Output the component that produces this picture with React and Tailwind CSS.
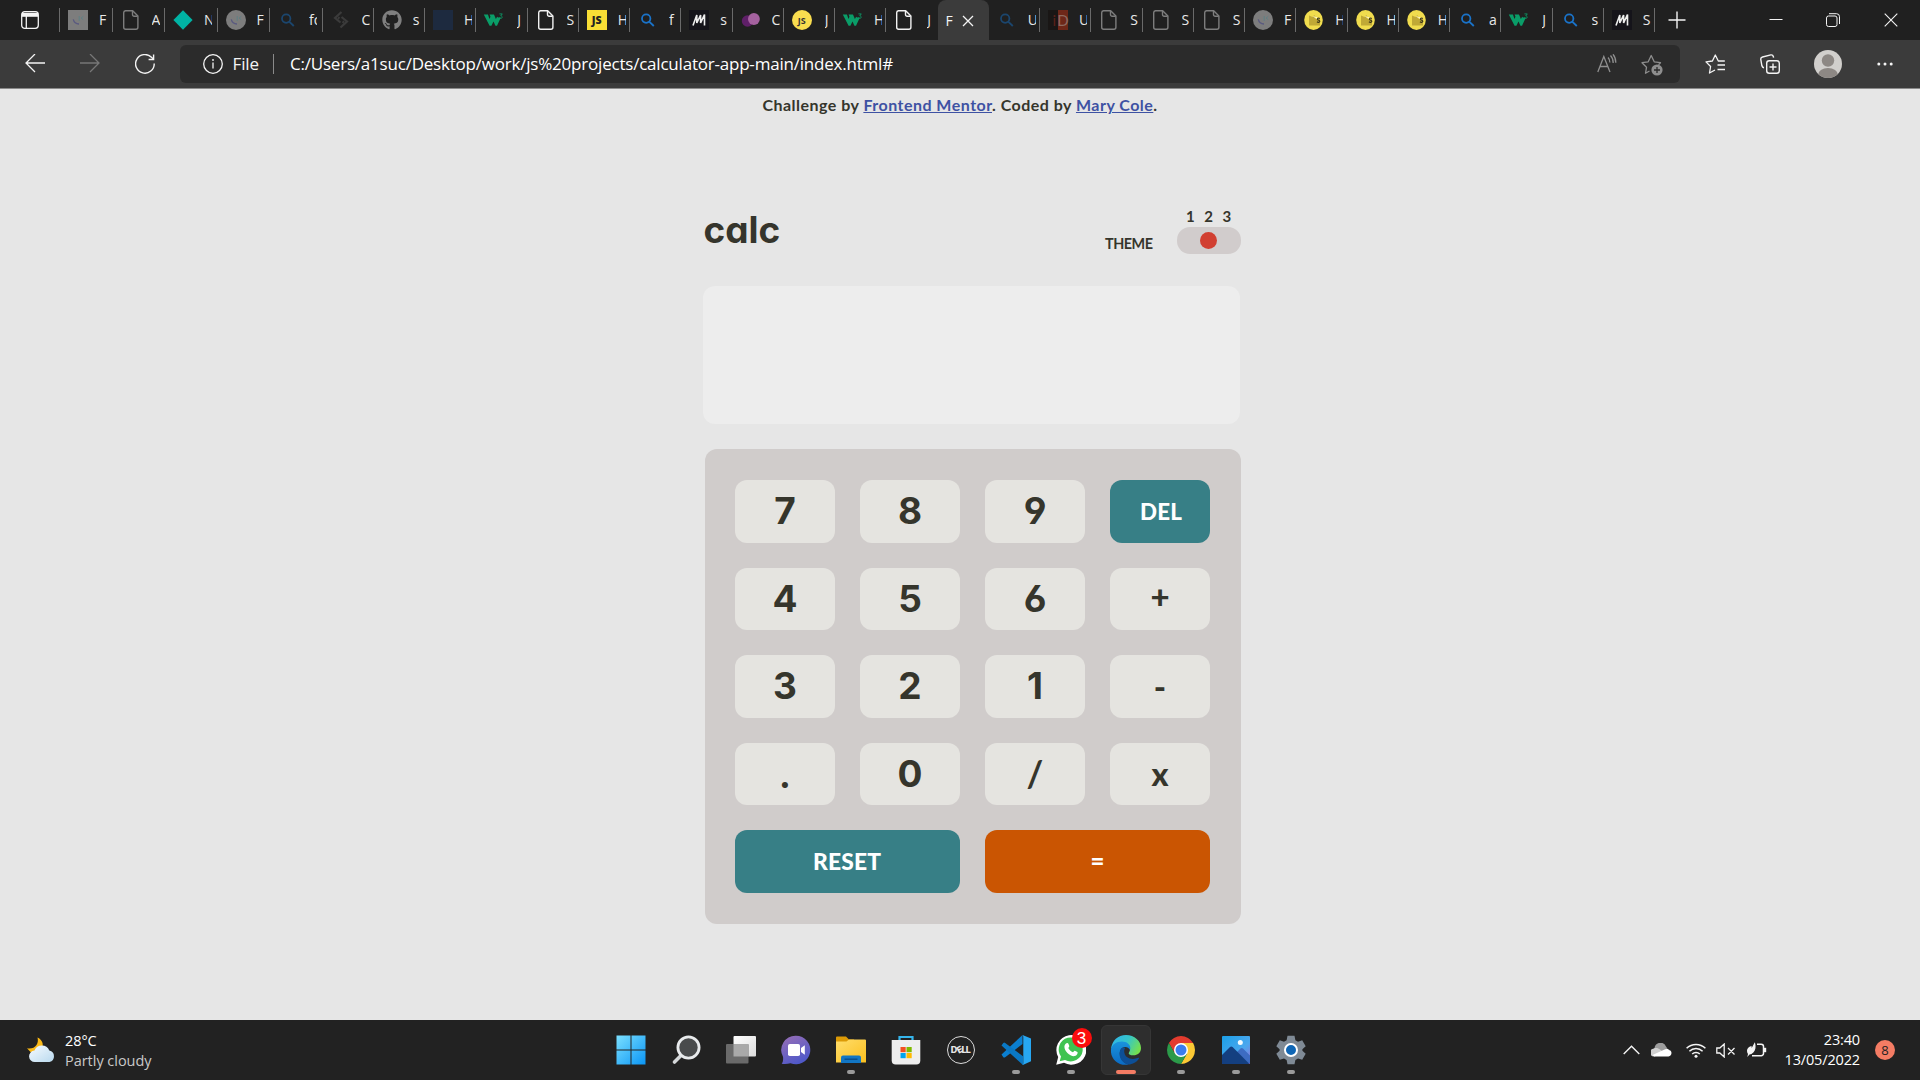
import React from "react";
import { FaGithub } from "react-icons/fa";

const UI = "font-['Open_Sans','Noto_Sans',sans-serif]";

/* ---------- tab favicons ---------- */
const PageIcon = ({ dim }) => (
  <svg width="20" height="20" viewBox="0 0 20 20" fill="none" stroke={dim ? "#7d7d7d" : "#f2f2f2"} strokeWidth="1.4" strokeLinejoin="round">
    <path d="M4.5.8h7.2l5.2 5.2v11.2a2 2 0 0 1-2 2H4.7a2 2 0 0 1-2-2V2.8A2 2 0 0 1 4.5.8z" />
    <path d="M11.5 1v3.6a1.6 1.6 0 0 0 1.6 1.6h3.6" />
  </svg>
);
const SearchIcon = ({ dim }) => (
  <svg width="20" height="20" viewBox="0 0 20 20" fill="none" stroke={dim ? "#1b466e" : "#1a73c9"} strokeWidth="1.8">
    <circle cx="8.2" cy="8.600" r="4.2" />
    <path d="M11.200 11.600l4.600 4.400" />
  </svg>
);
const Smile = ({ round }) => (
  <svg width="20" height="20" viewBox="0 0 20 20" fill="none">
    {round ? <circle cx="10" cy="10" r="10" fill="#7d7d7d" /> : <rect width="20" height="20" fill="#7d7d7d" />}
    <path d="M5.3 9.3c.6 2.800 3 4.600 5.700 4.700" stroke="#5a5a80" strokeWidth="1.300" />
    <path d="M11.200 6v5" stroke="#5d8084" strokeWidth="1" />
    <path d="M15.300 6.300l-2.300 1.800 2.300 1.500" stroke="#5d8084" strokeWidth=".9" />
  </svg>
);
const Diamond = () => (
  <svg width="20" height="20" viewBox="0 0 20 20"><path d="M10 .3L19.600 10 10 19.700.4 10z" fill="#00b3a4" /></svg>
);
const Cube = () => (
  <svg width="20" height="20" viewBox="0 0 20 20" fill="none" stroke="#3b3b3b" strokeWidth="2.200">
    <path d="M10.500 2L4 8l5.500 4.500M7 7.500l1.500 1M9.500 17.500l6.500-6L10.500 7M13 12.500l-1.500-1" />
  </svg>
);
const Navy = () => <div className="size-5 bg-[#1d2a3f]" />;
const W3 = () => (
  <svg width="22" height="20" viewBox="0 0 22 20" className="-ml-px">
    <path d="M.8 4.300h4.400l1.600 4.700 1-2.500-.9-2.200h4.600l2 4.700 1.300-2.400 1 .900h2.900l-4 8.500h-1.700L11 11.700 8.800 16H6.900z" fill="#0a9d68" />
    <path d="M17.200 3.600h3l-1.600 2c1.900 0 2 2.600.2 2.700-.9 0-1.500-.4-1.700-1" stroke="#0a9d68" strokeWidth=".9" fill="none" />
  </svg>
);
const JsSquare = () => (
  <div className="flex size-5 items-center justify-center bg-[#f8de35] font-['Open_Sans',sans-serif] text-[10.500px] leading-none font-extrabold text-[#222]">JS</div>
);
const JsRound = () => (
  <div className="flex size-5 items-center justify-center rounded-full bg-[#f9dd4f] font-['Open_Sans',sans-serif] text-[9px] leading-none font-bold text-[#333]">JS</div>
);
const Medium = () => (
  <svg width="20" height="20" viewBox="0 0 20 20">
    <rect width="20" height="20" fill="#15141a" />
    <path d="M4 15.500L7.800 5v8L11.600 5v8L15.500 4.500v11" stroke="#ededed" strokeWidth="1.600" fill="none" strokeLinejoin="bevel" />
  </svg>
);
const Dots = () => (
  <svg width="20" height="20" viewBox="0 0 20 20">
    <circle cx="6.500" cy="11" r="5.700" fill="#5f1f68" />
    <circle cx="12.900" cy="9" r="5.900" fill="#a5629f" />
  </svg>
);
const ID = () => (
  <div className="flex size-5 items-center bg-[#191615] font-['Lato',sans-serif] text-[15px] leading-none">
    <span className="w-[10px] pr-[2px] text-right text-[#5b2019]">i</span>
    <span className="flex h-5 w-[10px] items-center justify-center bg-[#6e2718] text-[#8d6a60]">D</span>
  </div>
);
const YellowS = () => (
  <svg width="20" height="20" viewBox="0 0 20 20">
    <ellipse cx="9.500" cy="10" rx="9.300" ry="10" fill="#f0dc4e" />
    <path d="M5 5.500l3.500 1.500 2-2 1 4 4.500-.5v7H5z" fill="#c0a936" />
    <path d="M9.500 6l2 2 1-1 .5 2 2-.5" stroke="#fff8c9" strokeWidth="1" fill="none" />
    <path d="M15.800 8.500c-1.800-.9-3 .2-2 1.200.8.700 2 .5 2 1.600 0 1.200-1.900 1.300-2.800.5" fill="none" stroke="#3a3617" strokeWidth="1.200" />
  </svg>
);

const firstTabs = [
  [<Smile />, "F"], [<PageIcon dim />, "A"], [<Diamond />, "N"], [<Smile round />, "F"], [<SearchIcon dim />, "fo"],
];
const midTabs = [
  [<Cube />, "C"], [<FaGithub size={20} color="#7f7f7f" />, "s"], [<Navy />, "H"], [<W3 />, "J"], [<PageIcon />, "S"],
  [<JsSquare />, "H"], [<SearchIcon />, "f"], [<Medium />, "s"], [<Dots />, "C"], [<JsRound />, "J"], [<W3 />, "H"],
  [<PageIcon />, "J"],
];
const lastTabs = [
  [<SearchIcon dim />, "U"], [<ID />, "U"], [<PageIcon dim />, "S"], [<PageIcon dim />, "S"], [<PageIcon dim />, "S"],
  [<Smile round />, "F"], [<YellowS />, "H"], [<YellowS />, "H"], [<YellowS />, "H"], [<SearchIcon />, "a"], [<W3 />, "J"],
  [<SearchIcon />, "s"], [<Medium />, "S"],
];

function Tab({ icon, label, wide, noLine }) {
  return (
    <div className={`flex h-6 shrink-0 items-center border-r pl-2 ${wide ? "w-[52.5px]" : "w-[51.25px]"} ${noLine ? "border-transparent" : "border-[#6a6a6a]"}`}>
      <div className="flex size-5 shrink-0 items-center">{icon}</div>
      <div className={`w-[8px] overflow-hidden text-[14px] leading-5 whitespace-nowrap text-[#e8e8e8] ${label === "J" ? "ml-[13px]" : "ml-[11px]"}`}>{label}</div>
    </div>
  );
}

function TabStrip() {
  return (
    <div className="flex h-10 items-center bg-[#202020]">
      <div className="flex h-6 w-[60px] shrink-0 items-center border-r border-[#6a6a6a] pl-[21px]">
        <svg width="18" height="18" viewBox="0 0 18 18" fill="none" stroke="#f4f4f4" strokeWidth="1.300">
          <rect x=".7" y=".7" width="16.600" height="16.600" rx="3" />
          <path d="M1 1.800h16v4H1z" fill="#f4f4f4" stroke="none" />
          <path d="M5.300 5v12" />
        </svg>
      </div>
      {firstTabs.map(([icon, label], i) => <Tab key={i} icon={icon} label={label} wide />)}
      {midTabs.map(([icon, label], i) => <Tab key={i} icon={icon} label={label} noLine={i === 11} />)}
      <div className="flex h-10 w-[51.25px] shrink-0 items-center rounded-t-lg bg-[#3b3b3b] pl-[8px] text-[14px] text-[#f4f4f4]">
        <span className="w-[16.500px]">F</span>
        <svg width="12" height="12" viewBox="0 0 12 12" stroke="#f4f4f4" strokeWidth="1.300" className="mt-px"><path d="M1 1l10 10M11 1L1 11" /></svg>
      </div>
      {lastTabs.map(([icon, label], i) => <Tab key={i} icon={icon} label={label} />)}
      <svg width="18" height="18" viewBox="0 0 18 18" stroke="#f4f4f4" strokeWidth="1.400" className="ml-[13px] shrink-0"><path d="M9 .5v17M.5 9h17" /></svg>
      <div className="ml-auto flex items-center pr-[22px]">
        <svg width="14" height="14" viewBox="0 0 14 14" stroke="#f4f4f4" strokeWidth="1"><path d="M.5 6.500h13" /></svg>
        <svg width="14" height="14" viewBox="0 0 14 14" stroke="#f4f4f4" fill="none" className="ml-[43px]">
          <rect x=".5" y="3" width="10.500" height="10.500" rx="2" /><path d="M3 .7h7.500a3 3 0 0 1 3 3V11" />
        </svg>
        <svg width="14" height="14" viewBox="0 0 14 14" stroke="#f4f4f4" strokeWidth="1.100" className="ml-[44px]"><path d="M.7.7l12.600 12.600M13.300.7L.7 13.300" /></svg>
      </div>
    </div>
  );
}

function Toolbar() {
  return (
    <div className="flex h-[49px] items-center border-b border-[#8a8a8a] bg-[#3b3b3b] pl-[25px] text-[#f4f4f4]">
      <svg width="20" height="20" viewBox="0 0 20 20" fill="none" stroke="#f4f4f4" strokeWidth="1.300"><path d="M20 9H1M10 0L1 9l9 9" /></svg>
      <svg width="20" height="20" viewBox="0 0 20 20" fill="none" stroke="#777" strokeWidth="1.300" className="ml-[35px]"><path d="M0 9h19M10 0l9 9-9 9" /></svg>
      <svg width="20" height="20" viewBox="0 0 20 20" fill="none" stroke="#f4f4f4" strokeWidth="1.400" className="ml-[35px]">
        <path d="M19.200 9.500A9.300 9.300 0 1 1 16.500 3.300L18.500 5.300" /><path d="M18.600.5v5h-5" />
      </svg>
      <div className="ml-[25px] flex h-[38px] w-[1500px] shrink-0 items-center rounded-md bg-[#2b2b2b] pl-[22.500px]">
        <svg width="20" height="20" viewBox="0 0 20 20" fill="none" stroke="#f4f4f4" strokeWidth="1.300">
          <circle cx="10" cy="10" r="9.300" /><path d="M10 8.500v6" /><circle cx="10" cy="6" r=".9" fill="#f4f4f4" stroke="none" />
        </svg>
        <span className="ml-[10px] w-[40px] text-[17px] tracking-[-0.1px]">File</span>
        <span className="h-5 w-px bg-[#8a8a8a]" />
        <span className="ml-[16.500px] text-[17px] tracking-[-0.21px] whitespace-nowrap text-white">C:/Users/a1suc/Desktop/work/js%20projects/calculator-app-main/index.html#</span>
        <svg width="20" height="20" viewBox="0 0 20 20" fill="none" stroke="#8e8e8e" strokeWidth="1.300" className="mr-[24px] ml-auto">
          <path d="M.8 18L6.800 2.500 13 18M2.800 12.500h8.200M11 3.500c1.300 1.300 1.900 3 1.900 5M13.500 1.500c1.800 1.900 2.700 4.300 2.700 7.500M16 .3c1.900 2.200 2.800 5 2.800 8.500" />
        </svg>
        <svg width="22" height="22" viewBox="0 0 22 22" fill="none" stroke="#8e8e8e" strokeWidth="1.300" strokeLinejoin="round" className="mr-[17px] mt-px">
          <path d="M8.500 17L4.500 19.300l1-6L1 8.700l6.200-.9L10.200 1.500l3 6.300 6.300.9-2 2" /><circle cx="16" cy="16" r="5.600" fill="#8e8e8e" stroke="none" /><path d="M16 13v6M13 16h6" stroke="#2b2b2b" />
        </svg>
      </div>
      <svg width="21" height="20" viewBox="0 0 21 20" fill="none" stroke="#f4f4f4" strokeWidth="1.300" strokeLinejoin="round" className="ml-[25px]">
        <path d="M19.800 7h-6.500L10.300 1 7.400 7 1 7.900l4.600 4.600-1.100 6.500 5.500-3M12.500 11h7.500M12.500 15.500H20" />
      </svg>
      <svg width="20" height="20" viewBox="0 0 20 20" fill="none" stroke="#f4f4f4" strokeWidth="1.400" className="ml-[34px]">
        <rect x="6.700" y="6.700" width="12.600" height="12.600" rx="2.500" /><path d="M13 9.500v7M9.500 13h7M4 13.800c-1.500-.2-1.800-1-2.100-2L.8 5.500c-.2-1.200.4-2.200 1.700-2.500L10.800.9c1.200-.2 2.200.4 2.500 1.600l.3 1.200" />
      </svg>
      <svg width="28" height="28" viewBox="0 0 28 28" className="ml-[34px]">
        <defs><clipPath id="av"><circle cx="14" cy="14" r="14" /></clipPath></defs>
        <circle cx="14" cy="14" r="14" fill="#d1cfcc" />
        <g clipPath="url(#av)" fill="#8d8884"><circle cx="14" cy="10.500" r="6.200" /><ellipse cx="14" cy="25" rx="10" ry="7" /></g>
      </svg>
      <svg width="16" height="4" viewBox="0 0 16 4" fill="#f4f4f4" className="ml-[35px]"><circle cx="1.800" cy="2" r="1.500" /><circle cx="8" cy="2" r="1.500" /><circle cx="14.200" cy="2" r="1.500" /></svg>
    </div>
  );
}

/* ---------- calculator ---------- */
const keys = ["7", "8", "9", "DEL", "4", "5", "6", "+", "3", "2", "1", "-", ".", "0", "/", "x"];
const keyStyle = {
  "+": "font-['Lato',sans-serif] text-[33px] font-black pb-[4px]",
  "-": "font-['Lato',sans-serif] text-[33px] font-black pt-[1px]",
  "/": "font-['Lato',sans-serif] text-[36px] font-bold pb-[3px]",
  x: "font-['Lato',sans-serif] text-[32px] font-black",
  ".": "font-['Lato',sans-serif] text-[37px] font-black pb-px",
};

function Key({ label }) {
  if (label === "DEL")
    return <button className="flex items-center justify-center rounded-xl bg-[#377f86] pl-[2px] text-[23.500px] font-black tracking-[0.2px] text-white"><span className="inline-block scale-x-95">DEL</span></button>;
  return (
    <button className="flex items-center justify-center rounded-xl bg-[#e5e4e0] leading-none text-[#35352c]">
      <span className={keyStyle[label] || "pb-[1px] font-['Inter',sans-serif] text-[37px] font-[650] [font-feature-settings:'cv03','cv04']"}>{label}</span>
    </button>
  );
}

function Calculator() {
  return (
    <main className="flex h-[931px] flex-col items-center bg-[#e6e6e6] font-['Lato',sans-serif] text-[#35352c]">
      <p className="mt-[4px] h-6 text-[16px] leading-6 font-bold tracking-[0.48px] whitespace-nowrap">
        Challenge by <a className="text-[#3e52a3] underline">Frontend Mentor</a>. Coded by <a className="text-[#3e52a3] underline">Mary Cole</a>.
      </p>
      <div className="mt-[83px] ml-[25px] w-[536px]">
        <header className="flex h-[86px] items-start justify-between">
          <h1 className="mt-[6px] -ml-px font-['Inter',sans-serif] text-[37px] leading-[48px] font-bold [font-feature-settings:'cv11']">calc</h1>
          <div className="flex items-start">
            <span className="mt-[33px] mr-[24px] text-[15px] leading-5 font-bold tracking-[-0.5px]"><span className="inline-block origin-right scale-x-96">THEME</span></span>
            <div className="w-16 pt-[7px]">
              <div className="-mt-px flex h-[20.500px] gap-[9.500px] pl-[9.500px] text-[15px] leading-5 font-bold"><span>1</span><span>2</span><span>3</span></div>
              <div className="flex h-[27px] items-center justify-center rounded-[13px] bg-[#d1cccc]"><span className="size-[17px] rounded-full bg-[#d13f31]" /></div>
            </div>
          </div>
        </header>
        <div className="-ml-[1.500px] h-[138px] w-[537px] rounded-xl bg-[#ededed]" />
        <section className="mt-[25px] grid h-[475px] grid-cols-4 grid-rows-5 gap-[25px] rounded-xl bg-[#d0cccb] px-[30.5px] py-[31px]">
          {keys.map((k) => <Key key={k} label={k} />)}
          <button className="col-span-2 rounded-xl bg-[#377f86] text-[23.500px] font-black tracking-[0.2px] text-white"><span className="inline-block scale-x-97">RESET</span></button>
          <button className="col-span-2 rounded-xl bg-[#ca5502] pb-[2px] text-[24px] font-black text-white">=</button>
        </section>
      </div>
    </main>
  );
}

/* ---------- taskbar icons ---------- */
const Win = () => (
  <svg width="30" height="30" viewBox="0 0 30 30">
    <defs><linearGradient id="w" x1="0" y1="0" x2="1" y2="1"><stop offset="0" stopColor="#7be0ff" /><stop offset="1" stopColor="#0a95f5" /></linearGradient></defs>
    <path d="M.5.500h14v14H.5zM15.500.500h14v14h-14zM.5 15.500h14v14H.5zM15.500 15.500h14v14h-14z" fill="url(#w)" />
  </svg>
);
const Search = () => (
  <svg width="30" height="30" viewBox="0 0 30 30">
    <path d="M10 20.500L3.500 27" stroke="#d5d8da" strokeWidth="3.600" strokeLinecap="round" />
    <circle cx="17.500" cy="12.500" r="10.600" fill="#494b4c" stroke="#e8eaec" strokeWidth="2.800" />
  </svg>
);
const TaskView = () => (
  <svg width="30" height="30" viewBox="0 0 30 30">
    <defs><linearGradient id="tv" x1="0" y1="0" x2="1" y2="1"><stop offset="0" stopColor="#fff" /><stop offset="1" stopColor="#dcdcdc" /></linearGradient></defs>
    <rect x="7.500" y="1" width="22.500" height="20.500" rx="1" fill="url(#tv)" />
    <rect x="0" y="9" width="22.500" height="19.500" rx="1" fill="#6a6a6a" /><path d="M7.500 9h15v12.500h-15z" fill="#a9a9a9" />
  </svg>
);
const Chat = () => (
  <svg width="30" height="30" viewBox="0 0 30 30">
    <defs><linearGradient id="ch" x1="0" y1="0" x2=".5" y2="1"><stop offset="0" stopColor="#9a6fb5" /><stop offset="1" stopColor="#5059c9" /></linearGradient></defs>
    <path d="M15 .7a14.300 14.300 0 1 1-5.500 27.500C7 29 4 29.300.7 28.800c1.200-1.500 1.700-4 1.300-7A14.300 14.300 0 0 1 15 .7z" fill="url(#ch)" />
    <rect x="7" y="9" width="12" height="12" rx="1.800" fill="#fff" /><path d="M20 13l3.800-2.800v9.600L20 17z" fill="#fff" />
  </svg>
);
const Folder = () => (
  <svg width="30" height="30" viewBox="0 0 30 30">
    <defs><linearGradient id="fo" x1="0" y1="0" x2="1" y2="1"><stop offset="0" stopColor="#ffdd6b" /><stop offset="1" stopColor="#fbc01f" /></linearGradient></defs>
    <path d="M0 2.500A1 1 0 0 1 1 1.500h9l3 3h5v6H0z" fill="#dc9a06" />
    <path d="M0 6.500h10.500l2.500-2h16A1 1 0 0 1 30 5.500v22H0z" fill="url(#fo)" />
    <path d="M5 28v-5.500a2 2 0 0 1 2-2h16a2 2 0 0 1 2 2V28z" fill="#1276c4" /><path d="M8.500 24.200h13" stroke="#0a4c8b" strokeWidth="1.400" />
  </svg>
);
const Store = () => (
  <svg width="30" height="30" viewBox="0 0 30 30">
    <path d="M8.500 6V2h13v4" stroke="#35b5ec" strokeWidth="2.200" fill="none" />
    <path d="M.7 5h28.600v20.500a4 4 0 0 1-4 4H4.700a4 4 0 0 1-4-4z" fill="#eeeeee" />
    <path d="M9.500 12h5.200v5.200H9.500z" fill="#f25022" /><path d="M15.500 12h5.200v5.200h-5.200z" fill="#7fba00" />
    <path d="M9.500 18h5.200v5.200H9.500z" fill="#00a4ef" /><path d="M15.500 18h5.200v5.200h-5.200z" fill="#ffb900" />
  </svg>
);
const Dell = () => (
  <div className="flex size-7 items-center justify-center rounded-full border-[1.500px] border-[#dcdcdc] font-['Inter',sans-serif] text-[9px] font-extrabold tracking-[-0.7px] text-[#e6e6e6]">
    D<span className="inline-block -rotate-[28deg]">E</span>LL
  </div>
);
const Code = () => (
  <svg width="30" height="30" viewBox="0 0 30 30">
    <path d="M.5 19.500L21.500 0v9L4.200 22.200a1.500 1.500 0 0 1-1.900 0z" fill="#0b7fd0" />
    <path d="M.5 10.500L2.300 8a1.500 1.500 0 0 1 1.900 0L22 21.200V30z" fill="#0a78c4" />
    <path d="M21.500 0L30 3.500v22.800L21.800 30c-.8 0 .5-.500.500-2V2c0-1.200-.8-2-.8-2z" fill="#27a7f2" />
  </svg>
);
const WhatsApp = () => (
  <div className="relative size-[30px]">
    <svg width="30" height="30" viewBox="0 0 30 30">
      <path d="M.2 29.800L2.200 22A15 14.800 0 1 1 8 27.800z" fill="#fff" />
      <path d="M3.700 26.300l1.300-4.800a12 12 0 1 1 4 3.500z" fill="#3fc351" />
      <path d="M10.500 8.200c.8-.6 1.600-.3 1.900.6l.9 2.200c.2.600-.9 1.700-1 2 .9 1.900 2.500 3.400 4.600 4.300.4-.1 1.400-1.700 1.900-1.500l2.600 1.300c.5.300.3 3.400-2.800 4-4.700.5-10.300-5-10.200-9.700.1-1.500 1-2.600 2.100-3.200z" fill="#fff" />
    </svg>
    <span className="absolute -top-[7px] left-4 flex size-5 items-center justify-center rounded-full bg-[#fb0d0d] font-['Liberation_Sans',sans-serif] text-[17px] leading-none text-white">3</span>
  </div>
);
const Edge = () => (
  <svg width="30" height="30" viewBox="0 0 30 30">
    <defs>
      <linearGradient id="e1" x1="0" y1=".2" x2="1" y2=".6"><stop offset="0" stopColor="#2fb4ea" /><stop offset=".5" stopColor="#35c5c9" /><stop offset="1" stopColor="#76e04c" /></linearGradient>
      <linearGradient id="e2" x1="0" y1="0" x2="0" y2="1"><stop offset="0" stopColor="#1a93dc" /><stop offset="1" stopColor="#0b6bc4" /></linearGradient>
    </defs>
    <path d="M0 14C1 5.500 7 0 15 0c8.500 0 15 6 15 13 0 4.800-3.600 7.300-7.500 7.300-3.800 0-5.500-1.500-4.500-2.900C21 13 17.500 9 12 9 6 9 1.500 11 0 14z" fill="url(#e1)" />
    <path d="M0 14c1-4 5-7.500 11-7.500 5.500 0 9.500 4 8 8.500-1-2-3-3.200-5-3-4 .3-6.500 5-4.500 10 1.500 4 4.500 6.800 8 7.500C7.500 31.500-1 24 0 14z" fill="url(#e2)" />
    <path d="M10 13.500c-3.500 6-.5 14 7 16 4.500.1 8.800-2.300 11-6 .4-.8-.2-1-.8-.7-6 2.800-14 .5-14-6.500 0-1.500.4-2.500 1-3.300-1.500-.9-3-.6-4.200.5z" fill="#0d4f97" />
  </svg>
);
const Chrome = () => (
  <svg width="28" height="28" viewBox="0 0 28 28">
    <path d="M1.880 7A14 14 0 0 1 26.120 7H14L7.940 17.500z" fill="#e33b2e" />
    <path d="M26.120 7A14 14 0 0 1 14 28l6.060-10.500L14 7z" fill="#fcc934" />
    <path d="M14 28A14 14 0 0 1 1.880 7l6.060 10.500h12.120z" fill="#2b9a49" />
    <circle cx="14" cy="14" r="7" fill="#fff" /><circle cx="14" cy="14" r="5.500" fill="#3b7ded" />
  </svg>
);
const Photos = () => (
  <svg width="28" height="28" viewBox="0 0 28 28">
    <defs><linearGradient id="p" x1="0" y1="0" x2="1" y2="1"><stop offset="0" stopColor="#1ba0e8" /><stop offset=".6" stopColor="#4aa7ee" /><stop offset="1" stopColor="#9b6bd3" /></linearGradient></defs>
    <rect width="28" height="28" rx="1" fill="url(#p)" /><path d="M14 17l4.500-4.500c.8-.8 1.700-.8 2.500 0l7 7V27H14z" fill="#3d6cc2" />
    <path d="M0 19l8-8c.8-.8 1.800-.8 2.600 0L27.500 28H0z" fill="#143f80" /><circle cx="18.300" cy="6.400" r="2.500" fill="#f2fbff" />
  </svg>
);
const Gear = () => (
  <svg width="30" height="30" viewBox="0 0 30 30">
    <path d="M11.500.8h7l.9 4.400 2.600 1.500 4.200-1.500 3.500 6.100-3.300 3 0 1.500 3.300 3-3.500 6-4.200-1.400-2.600 1.500-.9 4.300h-7l-.9-4.300L8 23.400l-4.200 1.400-3.500-6 3.300-3v-1.500l-3.300-3 3.500-6.100L8 6.700l2.600-1.500z" fill="#7f8a95" />
    <circle cx="15" cy="15" r="6" fill="#0f66b5" stroke="#fff" strokeWidth="2" />
  </svg>
);

const apps = [
  [<Win />], [<Search />], [<TaskView />], [<Chat />], [<Folder />, 1], [<Store />], [<Dell />], [<Code />, 1],
  [<WhatsApp />, 1], [<Edge />, 2], [<Chrome />, 1], [<Photos />, 1], [<Gear />, 1],
];

function Taskbar() {
  return (
    <footer className="flex h-[60px] items-center bg-[#222222] text-white">
      <div className="flex w-[603px] shrink-0 items-center pl-[26px]">
        <svg width="30" height="26" viewBox="0 0 30 26">
          <defs><linearGradient id="cl" x1="0" y1="0" x2="1" y2="1"><stop offset="0" stopColor="#f6fbff" /><stop offset="1" stopColor="#b9d9ee" /></linearGradient></defs>
          <path d="M11.500.5c4.500 2 6.500 6.500 4.500 11-2 4-8 5.500-11.500 3.500L1 11.300c4 .7 7.500-.3 9.500-3.300 1.500-2.300 1.700-5 1-7.500z" fill="#fbb917" />
          <path d="M9 25a5.700 5.700 0 0 1-.5-11.400A8 8 0 0 1 23.300 13.500 5.900 5.900 0 0 1 23.500 25z" fill="url(#cl)" />
        </svg>
        <div className="ml-[9px] pt-px text-[14.500px] leading-5 whitespace-nowrap">
          <div className="tracking-[-0.1px]">28°C</div>
          <div className="tracking-[-0.03px] text-[#c9c9c9]">Partly cloudy</div>
        </div>
      </div>
      {apps.map(([icon, state], i) => (
        <div key={i} className="flex h-[60px] w-[55px] shrink-0 items-center justify-center">
          <div className={`relative flex size-[50px] items-center justify-center rounded-md ${state === 2 ? "border border-[#363636] bg-[#2e2e2e]" : ""}`}>
            {icon}
            {state === 1 && <span className="absolute bottom-[1px] h-1 w-2 rounded-full bg-[#9a9a9a]" />}
            {state === 2 && <span className="absolute bottom-0 h-1 w-5 rounded-full bg-[#f47c64]" />}
          </div>
        </div>
      ))}
      <div className="ml-auto flex items-center pr-[25px]">
        <svg width="17" height="10" viewBox="0 0 17 10" fill="none" stroke="#f4f4f4" strokeWidth="1.400"><path d="M.7 9l7.800-7.800L16.300 9" /></svg>
        <svg width="21" height="14" viewBox="0 0 21 14" className="ml-[11px]">
          <path d="M4.500 12.500A4.200 4.200 0 0 1 3.500 5 6 6 0 0 1 15 3.500l2 3z" fill="#9d9d9d" />
          <path d="M3.500 13.500a4 4 0 0 1-.5-8c2-1 4.500-.3 6 1l4 3z" fill="#d0d0d0" />
          <path d="M1.500 12l11-5c3-1.800 5.500-.8 6 .3 3 .6 2.500 6.200-1 6.200h-13c-1.500 0-2.500-.6-3-1.500z" fill="#fff" />
        </svg>
        <svg width="20" height="15" viewBox="0 0 20 15" fill="none" stroke="#f4f4f4" strokeWidth="1.500" className="ml-[14px]">
          <path d="M.6 5.300a13.300 13.300 0 0 1 18.800 0M3.400 8.300a9.300 9.300 0 0 1 13.200 0M6.200 11a5.400 5.400 0 0 1 7.600 0" /><circle cx="10" cy="13.200" r="1.500" fill="#f4f4f4" stroke="none" />
        </svg>
        <svg width="20" height="15" viewBox="0 0 20 15" fill="none" stroke="#f4f4f4" strokeWidth="1.300" className="ml-[10px]">
          <path d="M.8 5v5h3l4.400 4V1L3.800 5zM12 5l6.500 6.500M18.500 5L12 11.500" />
        </svg>
        <svg width="21" height="16" viewBox="0 0 21 16" fill="none" stroke="#f4f4f4" strokeWidth="1.500" className="ml-[10px]">
          <path d="M11 2.300h4.200a2.300 2.300 0 0 1 2.300 2.300v6.800a2.300 2.300 0 0 1-2.300 2.300H6" /><path d="M19 5.800v4.400" strokeWidth="2.400" />
          <path d="M8.800.3c1.500 4 1 9.200-3.300 11.700l-2 .5L1.300 15l.7-3C-.8 7.500 3 4.500 5.500 4l.2 2z" fill="#f4f4f4" stroke="none" />
        </svg>
        <div className="ml-[18px] text-right text-[14.500px] leading-5 tracking-[-0.15px] whitespace-nowrap"><div>23:40</div><div>13/05/2022</div></div>
        <span className="ml-[15px] flex size-5 items-center justify-center rounded-full bg-[#f47c64] text-[13px] leading-none text-[#222]">8</span>
      </div>
    </footer>
  );
}

export default function App() {
  return (
    <div className={`h-[1080px] w-[1920px] overflow-hidden ${UI}`}>
      <TabStrip />
      <Toolbar />
      <Calculator />
      <Taskbar />
    </div>
  );
}
